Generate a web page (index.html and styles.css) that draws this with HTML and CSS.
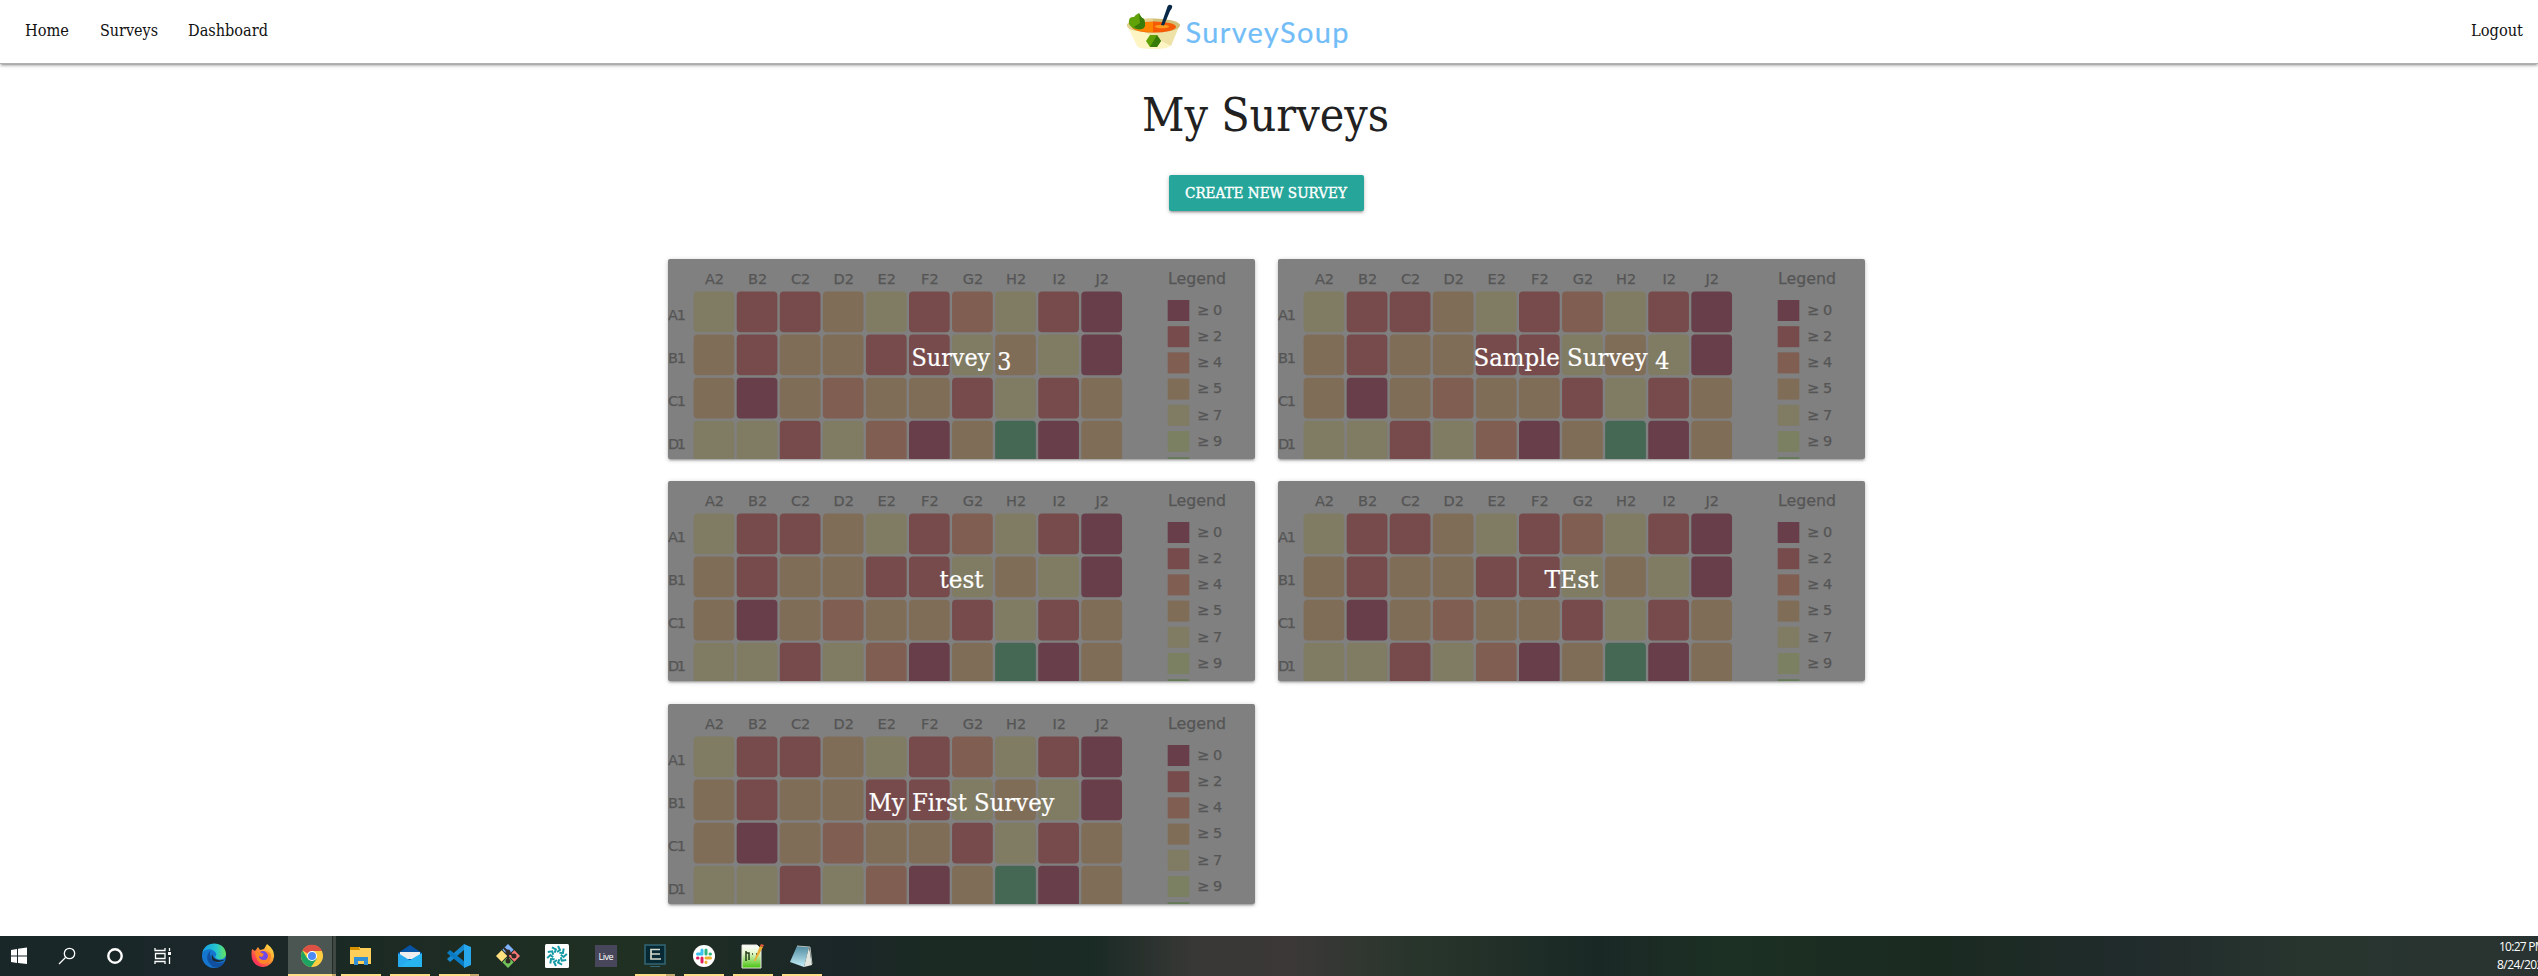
FILE: index.html
```html
<!DOCTYPE html>
<html lang="en">
<head>
<meta charset="utf-8">
<title>SurveySoup</title>
<link rel="stylesheet" href="styles.css">
</head>
<body>
<nav class="nav">
  <div class="nav-links">
    <a><svg width="45" height="30"><text x="0" y="21" textLength="44" lengthAdjust="spacingAndGlyphs">Home</text></svg></a>
    <a><svg width="59" height="30"><text x="0" y="21" textLength="58" lengthAdjust="spacingAndGlyphs">Surveys</text></svg></a>
    <a><svg width="82" height="30"><text x="0" y="21" textLength="80" lengthAdjust="spacingAndGlyphs">Dashboard</text></svg></a>
  </div>
  <svg class="logo" width="224" height="52" viewBox="0 0 224 52">
    <path d="M0 25Q27 31 53 24L43 46Q41 49 26 49T10 46Z" fill="#fdf5c4"/>
    <path d="M16 31 44 46 53 24 26 27Z" fill="#eee2a6"/>
    <ellipse cx="26.500" cy="25.500" rx="26.500" ry="7" fill="#d3be78"/>
    <path d="M0 25Q2 18 26 18.500V32Q2 32 0 25" fill="#e4d391"/>
    <ellipse cx="27" cy="27" rx="22" ry="5.500" fill="#f75a05"/>
    <path d="M9 24Q16 21.500 26 22V32Q12 32 7 29" fill="#ff8500"/>
    <ellipse cx="35" cy="26.500" rx="7" ry="1.800" fill="#ff9c20"/>
    <path d="M34 25 40 8Q41 4 44 5T43 11L37 25.500Z" fill="#082847"/>
    <path d="M2 24Q1 16 7 17Q8 15 12 13Q14 18 17 19Q20 27 15 29Q6 31 2 24" fill="#60a208"/>
    <path d="M12 13Q14 18 17 19Q20 27 15 29Q10 30 7 27L13 23Z" fill="#387b08"/>
    <path d="M23 35H30L34 41 30 47H23L19 41Z" fill="#60a208"/><path d="M30 35 34 41 30 47H23Z" fill="#387b08"/>
    <text class="wordmark" x="58.500" y="42.500" textLength="163">SurveySoup</text>
  </svg>
  <a class="logout"><svg width="53" height="30"><text x="0" y="21" textLength="52" lengthAdjust="spacingAndGlyphs">Logout</text></svg></a>
</nav>
<main class="page">
  <h1><svg width="248" height="70"><text x="0" y="47" textLength="247" lengthAdjust="spacingAndGlyphs">My Surveys</text></svg></h1>
  <button class="create"><svg width="163" height="24"><text x="0" y="17" textLength="162" lengthAdjust="spacingAndGlyphs">CREATE NEW SURVEY</text></svg></button>
  <section class="cards" id="cards"></section>
</main>
<footer class="taskbar">
  <svg width="840" height="40" viewBox="0 0 840 40">
    <path d="M11 14 17 13V19.500H11ZM18 12.800 27 11.500V19.500H18ZM11 20.500H17V27L11 26ZM18 20.500H27V28L18 27Z" fill="#fff"/>
    <g fill="none" stroke="#fff" stroke-width="1.300"><circle cx="69.500" cy="17.500" r="5.200"/><path d="M65.500 21.500 59 28"/><circle cx="115" cy="20" r="6.700" stroke-width="2.400"/><path d="M155 12V14.500H165V12M155 28V25.500H165V28M155.500 17.500H165V22.500H155.500ZM169.500 12V15M169.500 21V28"/></g>
    <rect x="168" y="16" width="3" height="3" fill="#fff"/>
    <defs>
      <linearGradient id="edgeTop" x2="1"><stop stop-color="#159de5"/><stop offset=".6" stop-color="#25c5d0"/><stop offset="1" stop-color="#66e45b"/></linearGradient>
      <linearGradient id="fox" x1="1" x2="0" y2="1"><stop stop-color="#fff34b"/><stop offset=".45" stop-color="#ff9330"/><stop offset=".8" stop-color="#fb3459"/></linearGradient>
      <linearGradient id="np" x2="0" y2="1"><stop stop-color="#fff"/><stop offset=".35" stop-color="#e6f7cd"/><stop offset="1" stop-color="#45c20c"/></linearGradient>
      <linearGradient id="note" x2="0" y2="1"><stop stop-color="#4f8ba0"/><stop offset="1" stop-color="#c5eef8"/></linearGradient>
    </defs>
    <circle cx="214" cy="20" r="12" fill="#1476cf"/>
    <path d="M202 19C203 4 225 4 226 18C226 24 217 25 215 21Q218 18 214 15C209 11 202 15 202 19" fill="url(#edgeTop)"/>
    <path d="M210 15Q203 23 213 31C220 33 224 28 224 26C216 29 209 24 210 15" fill="#114f9f"/>
    <path d="M212 18Q210 25 217 26Q224 26 226 22Q225 25 218 24Q213 23 212 18" fill="#1b2830"/>
    <path d="M252 13 255 15 258 11 260 14 264 13 267 8Q275 14 274 21A11.300 11.300 0 0 1 252 23Q251 17 252 13" fill="url(#fox)"/>
    <circle cx="263" cy="20" r="5" fill="#7048e8"/><path d="M255 15Q261 16 264 18L262 21 259 20Q259 24 264 24T268 18L265 15Q272 16 271 22Q268 28 263 28Q256 27 255 15" fill="#ff8528"/>
    <rect x="288" width="45" height="40" fill="#4b5653"/><rect x="332" width="4" height="40" fill="#3f4843"/><rect x="332" width="1" height="40" fill="#222b28"/>
    <circle cx="312" cy="20" r="11" fill="#ffcd40"/><path d="M312 20 302.500 14.500A11 11 0 0 1 322 15H312Z" fill="#dd5144"/><path d="M302.500 14.500A11 11 0 0 0 311 31L317 22.500 307 22Z" fill="#1da462"/><circle cx="312" cy="20" r="5" fill="#fff"/><circle cx="312" cy="20" r="4" fill="#4c8bf5"/>
    <path d="M350 11H360V12H371V28H350Z" fill="#ffcf5a"/><path d="M350 11H359L360 14H350Z" fill="#d89400"/><path d="M354 29V21H368V29H364V25H358V29Z" fill="#318fd5"/>
    <path d="M398 17 410 9 422 17V31H398Z" fill="#0754a5"/><path d="M400 16H420V23H400Z" fill="#eee"/><path d="M398 17 411 25 398 31Z" fill="#27a9ed"/><path d="M422 17 398 31H422Z" fill="#28b4f0"/>
    <path d="M464 8V14L450 26 447 23Z" fill="#1688ce"/><path d="M447 17 450 14 465 26V32Z" fill="#087bc4"/><path d="M464 8 471 11V29L464 32Z" fill="#27a7ee"/>
    <g transform="translate(508 20) rotate(45)"><rect x="-8.500" y="-8.500" width="8" height="8" fill="#80b3ff"/><rect x=".5" y="-8.500" width="8" height="8" fill="#ff7777"/><rect x="-8.500" y=".5" width="8" height="8" fill="#ffe180"/><rect x=".5" y=".5" width="8" height="8" fill="#72c45a"/></g>
    <g stroke="#302925" stroke-width="2" fill="#302925"><path d="M504 12 508 16V26M508 16 514 20" fill="none"/><circle cx="508" cy="16" r="1.500"/><circle cx="514" cy="20" r="1.500"/><circle cx="508" cy="25" r="1.500"/></g>
    <rect x="545" y="8" width="24" height="24" rx="1.500" fill="#fff"/>
    <g id="burst" fill="none" stroke="#159ba5" stroke-width="2" transform="translate(557 20)"></g>
    <rect x="595" y="9" width="22" height="22" fill="#48465a"/><text x="598.500" y="24" class="live" textLength="15">Live</text>
    <rect x="645" y="9" width="20" height="19" fill="#062934" stroke="#346775" stroke-width="1.500"/><path d="M660 13.500H651V23H661M651 18H660" fill="none" stroke="#d5dccd" stroke-width="1.700"/><path d="M650 30.500H660" stroke="#346775"/>
    <circle cx="704" cy="20" r="11" fill="#fff"/>
    <g stroke-width="3" stroke-linecap="round"><path d="M702 14V18M697.500 18H701" stroke="#36c5f0"/><path d="M706 14V18M710 18H710.500" stroke="#2eb67d"/><path d="M697.500 22H698M702 22V26" stroke="#e01e5a"/><path d="M706 22H710.500M706 26V26.500" stroke="#ecb22e"/></g>
    <path d="M742 9H757L761 13V32H742Z" fill="url(#np)" stroke="#e5e5df"/><path d="M746 15V25M746 17H749V24M752 18H753M756 18H757" stroke="#253d18" stroke-width="1.500" fill="none"/><path d="M754 25 760 10 763 11 755.500 25Z" fill="#efac32"/><path d="M760 10 761 8 764 9 763 11Z" fill="#e45b3e"/>
    <path d="M797 10 809 11 804 31 790 26Z" fill="url(#note)"/><path d="M809 11 812 29 804 31Z" fill="#e1e7df"/><path d="M797 10 810 11 812 28" fill="none" stroke="#b5bdba"/>
    <g fill="#ffdc87"><path d="M288 38H332V40H288ZM341 38H381V40H341ZM390 38H430V40H390ZM439 38H470V40H439ZM635 38H666V40H635ZM684 38H724V40H684ZM733 38H773V40H733ZM782 38H822V40H782Z"/></g>
    <path d="M332 38H336V40H332ZM470 38H479V40H470ZM666 38H675V40H666Z" fill="#c5aa70"/>
  </svg>
  <div class="clock"><span>10:27 PM</span><span>8/24/2020</span></div>
</footer>
<script src="app.js"></script>
</body>
</html>
```
FILE: styles.css
```css
* { box-sizing: border-box; }
body { margin: 0; height: 976px; overflow: hidden; background: #fff; display: flex; flex-direction: column; font-family: "DejaVu Serif Condensed", "DejaVu Serif", serif; color: #212121; }
svg { display: block; }
.nav { height: 64px; flex: none; display: grid; grid-template-columns: 1127px 224px 1fr; align-items: start; box-shadow: 0 2px 2px 0 rgba(0,0,0,.14), 0 3px 1px -2px rgba(0,0,0,.12), 0 1px 5px 0 rgba(0,0,0,.2); border-bottom: 1px solid #b0b0b0; }
.nav-links { display: flex; gap: 29.500px; padding: 15px 0 0 25px; }
.nav text { fill: #111; font-size: 16.500px; }
.nav .wordmark { font-family: Lato, sans-serif; font-size: 29px; fill: #72bdf7; stroke: #72bdf7; stroke-width: .2px; stroke-linejoin: round; }
.logout { justify-self: end; padding: 15px 14px 0 0; }
.page { flex: 1; display: flex; flex-direction: column; align-items: center; padding-right: 6px; min-height: 0; }
h1 { margin: 20px 0 0; height: 91px; font-weight: 400; }
h1 text { font-size: 46px; fill: #212121; }
.create { border: 0; border-radius: 2px; width: 195px; height: 36px; padding: 6px 16px; background: #26a69a; box-shadow: 0 2px 2px rgba(0,0,0,.14), 0 3px 1px -2px rgba(0,0,0,.12), 0 1px 5px rgba(0,0,0,.2); }
.create text { fill: #fff; font: 500 14px "DejaVu Serif Condensed", serif; stroke: #fff; stroke-width: .35px; }
.cards { display: grid; grid-template-columns: 587px 587px; grid-template-rows: 222px 223px 200px; column-gap: 23px; margin-top: 48px; }
.card { height: 200px; border-radius: 2px; overflow: hidden; background: #808080; box-shadow: 0 2px 2px rgba(0,0,0,.14), 0 3px 1px -2px rgba(0,0,0,.12), 0 1px 5px rgba(0,0,0,.2); }
.card text { font-family: "DejaVu Sans", sans-serif; fill: #555; stroke: #555; stroke-width: .25px; font-size: 14.500px; }
.card .legend { font-size: 16px; }
.card .title { font-family: "DejaVu Serif Condensed", serif; font-size: 25px; fill: #fff; stroke: #fff; stroke-width: .2px; }
.taskbar { height: 40px; flex: none; display: flex; justify-content: space-between; overflow: hidden; background: linear-gradient(90deg, #192728 0, #1b272a 9%, #1b2924 13%, #203022 25%, #1a2628 33%, #1b2a22 37%, #1a2a24 43%, #383836 47%, #3b3837 51%, #27352b 56%, #1a2825 63%, #1c3023 68%, #1a2a20 76%, #202b2b 84%, #28352e 91%, #293331 100%); }
.live { font: 9px "Open Sans", sans-serif; fill: #fff; }
.clock { width: 39px; flex: none; display: flex; flex-direction: column; white-space: nowrap; font: 12px/18px "Open Sans", sans-serif; letter-spacing: -.75px; color: #fff; padding-top: 2px; }
.clock span:last-child { margin-left: -2px; letter-spacing: -.5px; }
```
FILE: app.js
```js
const colors = { p: '#673e49', r: '#774b4b', o: '#805e51', b: '#806d58', y: '#807b63', l: '#7b8063', g: '#446854' };
const rows = ['yrrbyroyrp', 'brbbrrybyp', 'bpbobbryrb', 'yyryopbgpb'];
const surveys = [['Survey <tspan dy="4">3</tspan>', 100], ['Sample Survey <tspan dy="3">4</tspan>', 196], ['test', 44], ['TEst', 54], ['My First Survey', 186]];

const parts = [];
rows.forEach((row, j) => {
  const y = 32.5 + j * 43.1;
  parts.push(`<text x="0" y="${y + 28.5}" textLength="18">${'ABCD'[j]}1</text>`);
  [...row].forEach((key, i) => {
    parts.push(`<rect x="${25.6 + i * 43.08}" y="${y}" width="40.7" height="40.7" rx="4" fill="${colors[key]}"/>`);
  });
});
[...'ABCDEFGHIJ'].forEach((letter, i) => {
  parts.push(`<text x="${46.5 + i * 43.08}" y="25" text-anchor="middle">${letter}2</text>`);
});
parts.push('<text class="legend" x="500" y="25" textLength="58" lengthAdjust="spacingAndGlyphs">Legend</text>');
['p', 'r', 'o', 'b', 'y', 'l'].forEach((key, i) => {
  const y = 41 + i * 26.2;
  parts.push(`<rect x="499.7" y="${y}" width="21.6" height="21" fill="${colors[key]}"/>`);
  parts.push(`<text x="529" y="${y + 14.8}">≥</text><text x="545" y="${y + 14.8}">${[0, 2, 4, 5, 7, 9][i]}</text>`);
});
parts.push('<rect x="499.7" y="198.2" width="21.6" height="3" fill="#647956"/>');

document.getElementById('cards').innerHTML = surveys.map(([name, width]) =>
  `<article class="card"><svg width="587" height="200">${parts.join('')}<text class="title" x="${293.5 - width / 2}" y="107" textLength="${width}" lengthAdjust="spacingAndGlyphs">${name}</text></svg></article>`
).join('');

document.getElementById('burst').innerHTML = Array.from({ length: 10 }, (_, i) =>
  `<path d="M0-4 3-6 1-10" transform="rotate(${i * 36})"/>`).join('');
```
